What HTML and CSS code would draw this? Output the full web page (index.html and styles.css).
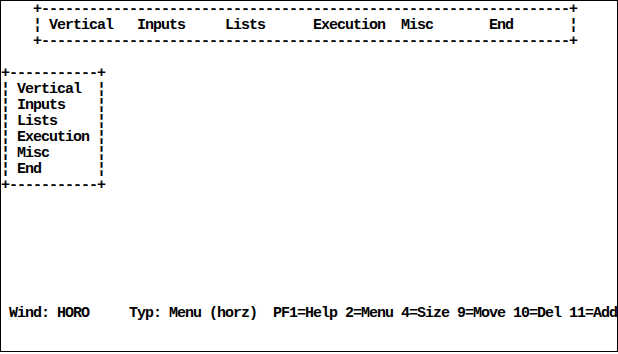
FILE: index.html
```html
<!DOCTYPE html>
<html lang="en">
<head>
    <meta charset="UTF-8">
    <title>Menu Editor</title>
    <link rel="stylesheet" href="styles.css">
</head>
<body>
    <div class="screen">
<pre class="hmenu">+------------------------------------------------------------------+
¦ Vertical   Inputs     Lists      Execution  Misc       End       ¦
+------------------------------------------------------------------+</pre>
<pre class="vmenu">+-----------+
¦ Vertical  ¦
¦ Inputs    ¦
¦ Lists     ¦
¦ Execution ¦
¦ Misc      ¦
¦ End       ¦
+-----------+</pre>
<pre class="status"> Wind: HORO     Typ: Menu (horz)  PF1=Help 2=Menu 4=Size 9=Move 10=Del 11=Add</pre>
    </div>
</body>
</html>
```

FILE: styles.css
```css
/* text mode screen, 8x16 cells */
body {
    margin: 0;
    padding: 0;
    background-color: #FFFFFF;
}
.screen {
    box-sizing: border-box;
    width: 618px;
    height: 352px;
    border: 1px solid #000000;
    padding: 1px 0 0 0;
    overflow: hidden;
    color: #000000;
}
pre {
    margin: 0;
    font-family: "Liberation Mono", "DejaVu Sans Mono", monospace;
    font-size: 15px;
    font-weight: bold;
    letter-spacing: -1px;
    line-height: 16px;
    white-space: pre;
}
.hmenu {
    margin-left: 32px;
}
.vmenu {
    margin-top: 16px;
}
.status {
    margin-top: 112px;
}
```
